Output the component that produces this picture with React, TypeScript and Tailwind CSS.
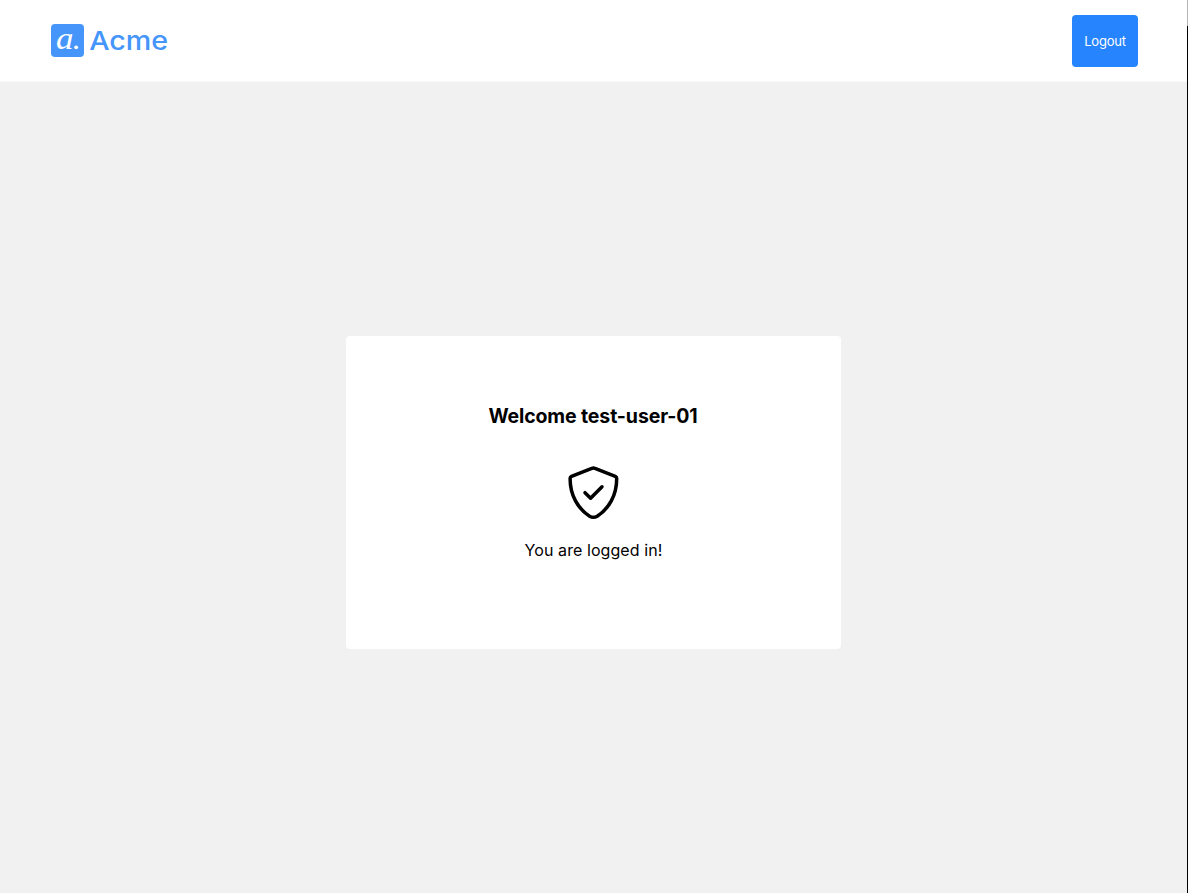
function Logo() {
  return (
    <a className="mb-px flex items-center gap-[6px] text-[#4595fb]" aria-label="Acme">
      <span className="flex h-[33px] w-[33px] items-center justify-center rounded-[4px] bg-[#4595fb]">
        <svg className="overflow-visible" width="33" height="33" viewBox="0 0 33 33" fill="#fff">
          <text
            x="5"
            y="25"
            fontSize="32"
            fontStyle="italic"
            textLength="17.5"
            lengthAdjust="spacingAndGlyphs"
            fontFamily="'Liberation Serif', serif"
          >
            a
          </text>
          <circle cx="25.2" cy="23.3" r="1.9" />
        </svg>
      </span>
      <svg className="overflow-visible" width="80" height="33" viewBox="0 0 80 33" fill="currentColor">
        <text
          x="-0.8"
          y="25.6"
          fontSize="26"
          fontWeight="500"
          textLength="79"
          lengthAdjust="spacingAndGlyphs"
          fontFamily="Inter, sans-serif"
        >
          Acme
        </text>
      </svg>
    </a>
  );
}

function ShieldCheck() {
  return (
    <svg
      width="54"
      height="56"
      viewBox="0 0 54 56"
      fill="none"
      stroke="#000"
      strokeWidth="3.5"
      strokeLinecap="round"
      strokeLinejoin="round"
    >
      <path d="M25.8 3.3Q27.4 2.6 29 3.3L49.3 11.3Q50.7 11.9 50.7 13.5C50.7 30.5 42.8 43.8 31.2 51.2Q27.4 53.5 23.6 51.2C12 43.8 4.1 30.5 4.1 13.5Q4.1 11.9 5.5 11.3Z" />
      <path d="M19 27.7L24.6 33.2L36 21.8" />
    </svg>
  );
}

export default function App() {
  return (
    <div className="flex h-[894px] w-[1188px] overflow-hidden bg-white font-['Inter',sans-serif] text-black">
      <div className="flex h-[893px] w-[1187px] flex-col bg-[#f1f1f1]">
        <header className="flex h-[82px] shrink-0 items-center justify-between border-b border-[#f8f8f8] bg-white pt-px pr-[49px] pl-[51px]">
          <Logo />
          <button className="h-[52px] w-[66px] rounded-[4px] bg-[#2684ff] pt-px text-[13px] tracking-[-0.2px] text-white">
            Logout
          </button>
        </header>
        <main className="flex flex-1 justify-center pt-[254px]">
          <section className="flex h-[313px] w-[495px] flex-col items-center rounded-[4px] bg-white pt-[66px]">
            <h1 className="mr-px text-[19.5px] leading-7 font-bold tracking-[-0.12px] whitespace-nowrap">
              Welcome test-user-01
            </h1>
            <div className="mt-[35px] mr-[2px]">
              <ShieldCheck />
            </div>
            <p className="mt-[17px] text-[16px] leading-6 tracking-[0.08px] whitespace-nowrap">
              You are logged in!
            </p>
          </section>
        </main>
      </div>
      <div className="flex w-px flex-col">
        <div className="h-[26px] bg-[#b5b5b5]" />
        <div className="h-[867px] bg-black" />
      </div>
    </div>
  );
}
